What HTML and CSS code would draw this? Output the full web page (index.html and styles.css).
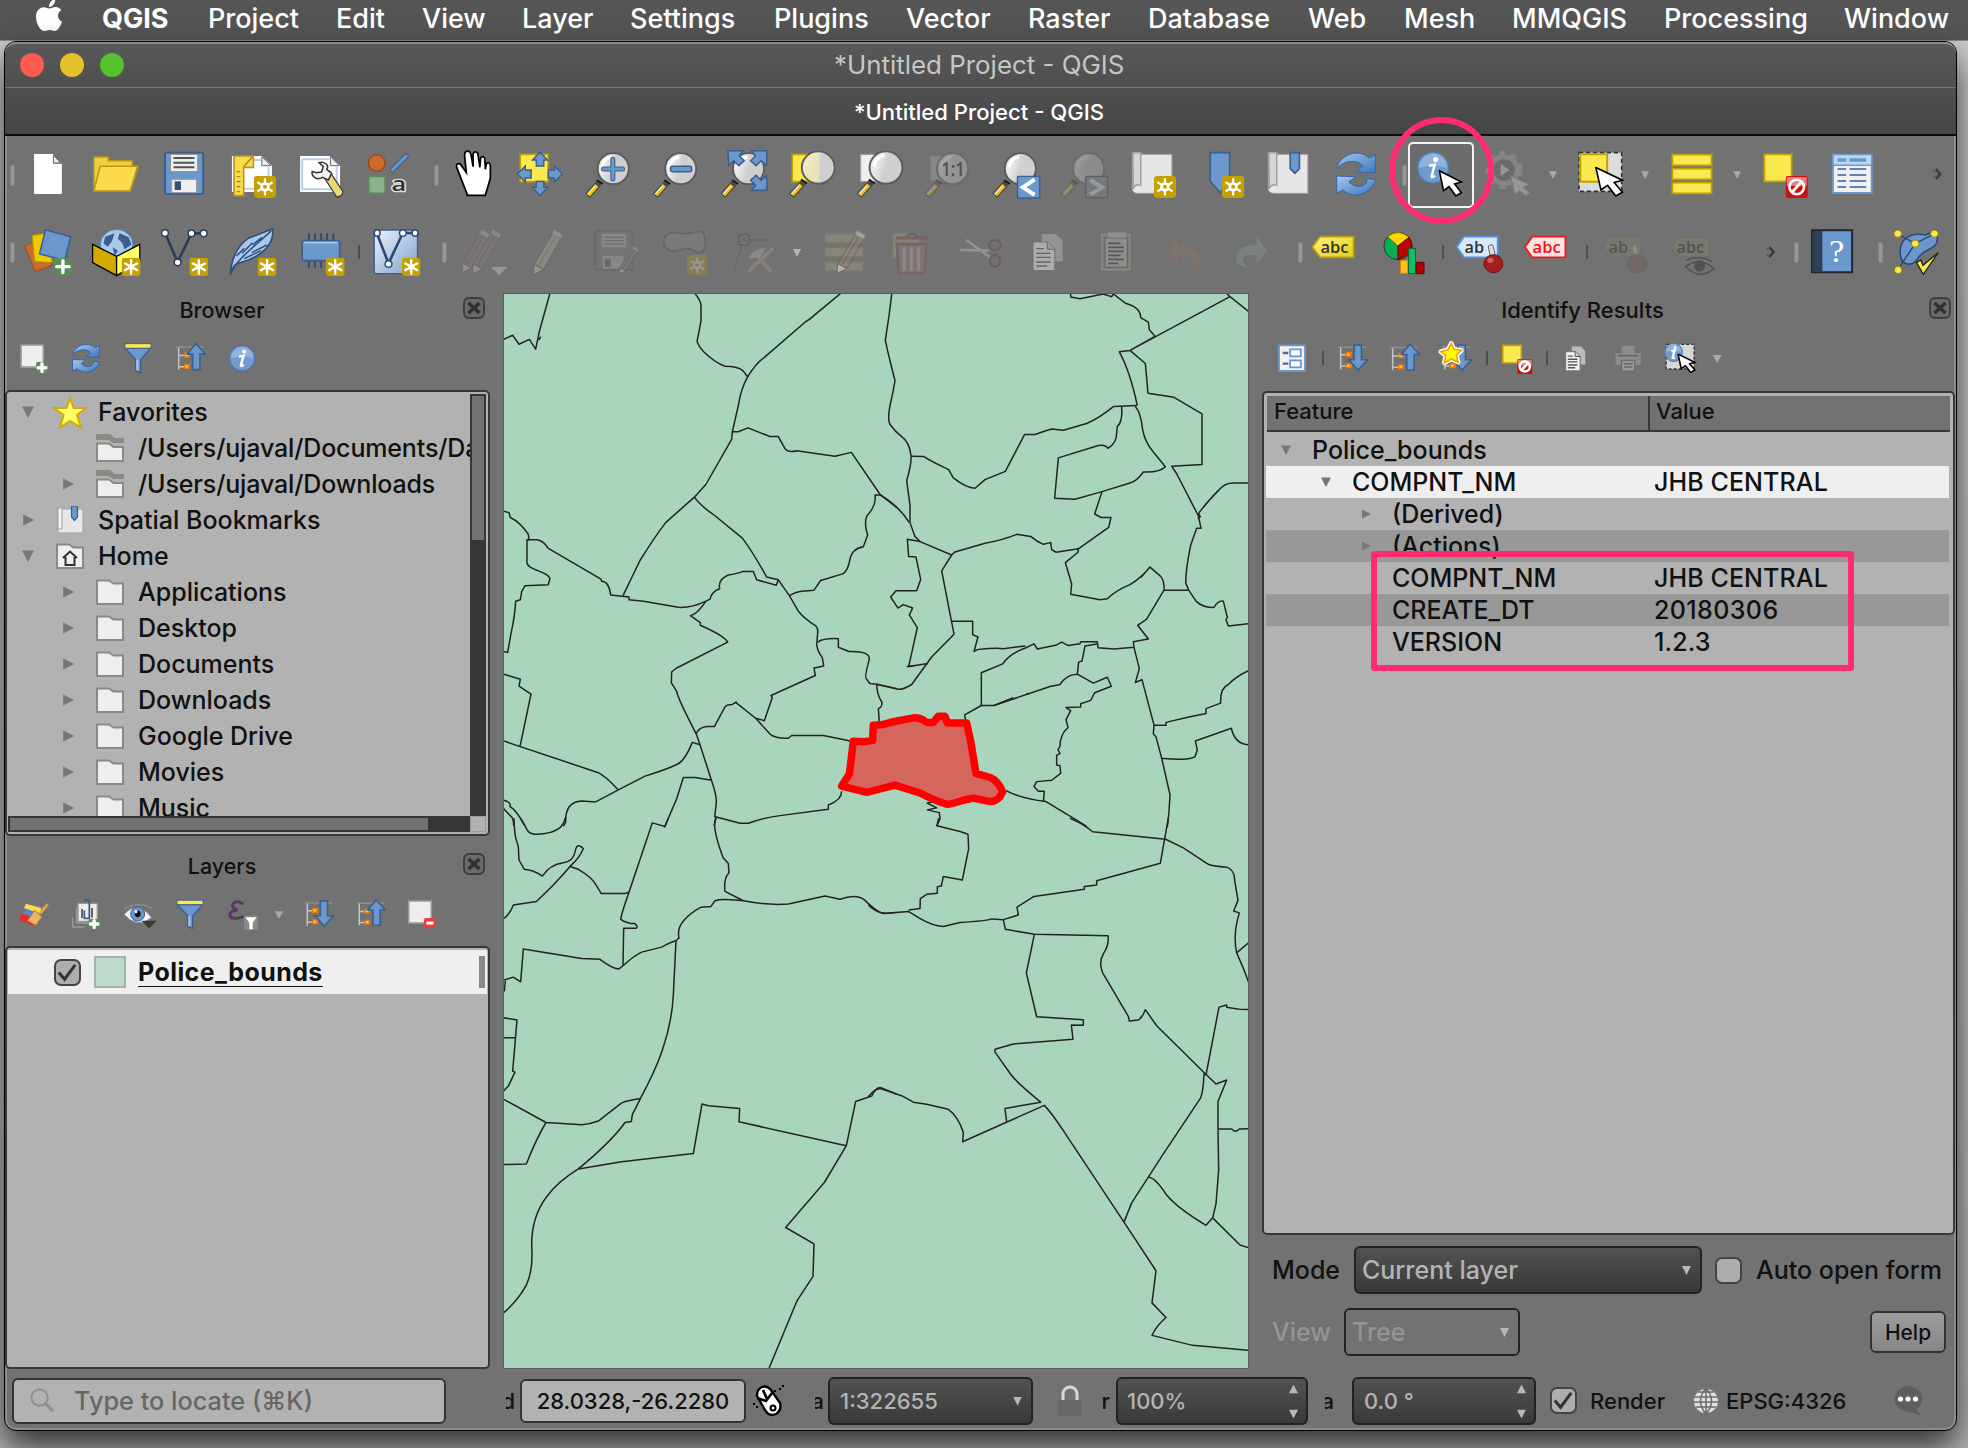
FILE: index.html
```html
<!DOCTYPE html>
<html lang="en">
<head>
<meta charset="utf-8">
<title>*Untitled Project - QGIS</title>
<link rel="stylesheet" href="styles.css">
</head>
<body>
<svg class="defs" width="0" height="0" aria-hidden="true">
  <defs>
    <linearGradient id="gLens" x1="0" y1="0" x2="1" y2="0.3"><stop offset="0.3" stop-color="#e9e9e9"/><stop offset="0.6" stop-color="#cfcfcf"/></linearGradient>
    <linearGradient id="gBlue" x1="0" y1="0" x2="1" y2="1"><stop offset="0" stop-color="#eef3fa"/><stop offset="1" stop-color="#7d9fcd"/></linearGradient>
    <linearGradient id="gArc" x1="0" y1="0" x2="1" y2="1"><stop offset="0" stop-color="#a9c8ea"/><stop offset="1" stop-color="#3a77bf"/></linearGradient>
    <linearGradient id="gTag" x1="0" y1="0" x2="1" y2="1"><stop offset="0" stop-color="#fff27a"/><stop offset="1" stop-color="#e5cf10"/></linearGradient>
    <symbol id="new" viewBox="0 0 22 22" preserveAspectRatio="none"><rect width="22" height="22" rx="4" fill="#c4a000"/><path d="M11 3v16M4 7l14 8M4 15l14-8" stroke="#fff" stroke-width="2.4" stroke-linecap="round"/></symbol>
    <symbol id="newsun" viewBox="0 0 22 22" preserveAspectRatio="none"><rect width="22" height="22" rx="4" fill="#c4a000"/><path d="M11 2.5v17M3.5 6.5l15 9M3.5 15.5l15-9" stroke="#fff" stroke-width="2.2"/><circle cx="11" cy="11" r="4.6" fill="#fff"/><circle cx="11" cy="11" r="2" fill="#c4a000"/></symbol>
    <symbol id="plus" viewBox="0 0 20 20" preserveAspectRatio="none"><rect width="20" height="20" rx="4" fill="#5a8c5a"/><path d="M10 3.5v13M3.5 10h13" stroke="#fff" stroke-width="3.4" stroke-linecap="round"/></symbol>
    <symbol id="ban" viewBox="0 0 20 20" preserveAspectRatio="none"><rect width="20" height="20" rx="2" fill="#cc1010"/><rect x="1" y="1" width="18" height="8" fill="#e58080"/><circle cx="10" cy="10" r="6.6" fill="none" stroke="#fff" stroke-width="2.6"/><path d="M14 5.5L6 14.500" stroke="#fff" stroke-width="2.8"/></symbol>
    <symbol id="mag" viewBox="0 0 106 136" preserveAspectRatio="none"><path d="M36 88L6 131" stroke="#4a4a4a" stroke-width="6.500"/><path d="M28 99L8 128" stroke="#f5c211" stroke-width="4"/><path d="M24 101L6 126" stroke="#fff" stroke-width="1"/><path d="M34 91l2-4" stroke="#111" stroke-width="7"/><ellipse cx="67" cy="49" rx="37" ry="47" fill="url(#gLens)" stroke="#5c5c5c" stroke-width="2"/><path d="M40 45c2-18 10-28 24-32" fill="none" stroke="#fff" stroke-width="3"/></symbol>
    <symbol id="cursor" viewBox="0 0 60 80" preserveAspectRatio="none"><path d="M2 2L12 62L25 50L41 78L54 68L38 42L54 36Z" fill="#fff" stroke="#000" stroke-width="1.600"/></symbol>
    <symbol id="refresh" viewBox="0 0 95 132" preserveAspectRatio="none"><path d="M2 50C8 10 52-14 78 18L93 8V62L48 60L64 42C48 20 18 26 2 50Z" fill="url(#gArc)" stroke="#2f66a8" stroke-width="1"/><path d="M93 82C87 122 43 146 17 114L2 124V72L47 74L31 90C47 112 77 104 72 80Z" fill="url(#gArc)" stroke="#2f66a8" stroke-width="1"/></symbol>
    <symbol id="info" viewBox="0 0 20 20" preserveAspectRatio="none"><circle cx="10" cy="10" r="9.500" fill="#6f9bcf" stroke="#4a78b0" stroke-width="1"/><path d="M1.500 10A8.500 8.500 0 0 1 18.500 10A22 16 0 0 0 1.500 10" fill="#8fb3dc"/><circle cx="11.500" cy="5" r="1.600" fill="#fff"/><path d="M7.500 8.800l3.500-.6-2 7.200c0 .8 1.200.4 2.200-.5" fill="none" stroke="#fff" stroke-width="2.500"/></symbol>
    <symbol id="tree-up" viewBox="0 0 90 80" preserveAspectRatio="none"><path d="M0 12H84" stroke="#8f8f8f" stroke-width="1.500"/><path d="M8 14V76M8 36H24M8 68H24" stroke="#c4c4c4" stroke-width="1.500" fill="none"/><path d="M24 28h18v14H24zM24 60h18v14H24z" fill="#f57900"/><path d="M28 32h8v6h-8zM28 64h8v6h-8z" fill="#fcd060"/><path d="M60 2L88 32H72V76H50V32H34Z" fill="#6b98cc" stroke="#3b5f8c" stroke-width="1.600"/></symbol>
    <symbol id="tree-down" viewBox="0 0 90 80" preserveAspectRatio="none"><path d="M0 10H84" stroke="#8f8f8f" stroke-width="1.500"/><path d="M8 12V74M8 32H24M8 64H24" stroke="#c4c4c4" stroke-width="1.500" fill="none"/><path d="M22 24h20v14H22zM22 56h20v14H22z" fill="#f57900"/><path d="M27 28h8v6h-8zM27 60h8v6h-8z" fill="#fcd060"/><path d="M48 4H70V46H88L60 76L32 46H48Z" fill="#6b98cc" stroke="#3b5f8c" stroke-width="1.600"/></symbol>
    <symbol id="funnel" viewBox="0 0 80 80" preserveAspectRatio="none"><path d="M2 14H78L48 44V78L33 72V44Z" fill="#6b98cc" stroke="#3b5f8c" stroke-width="1.400"/><path d="M38 44V72" stroke="#a9c8ea" stroke-width="2"/><rect x="1" y="2" width="78" height="12" fill="#fce94f" stroke="#3b5f8c" stroke-width="1"/></symbol>
    <symbol id="folder" viewBox="0 0 28 26" preserveAspectRatio="none"><path d="M1 25V1.500H13L17.500 4.500H27V25Z" fill="#eee" stroke="#8a8a84" stroke-width="2"/></symbol>
    <symbol id="folder-link" viewBox="0 0 28 28" preserveAspectRatio="none"><path d="M0 0H14L19 4H28V9H17L13 6H0Z" fill="#8a8a84"/><path d="M1 27V9.500H13L17.500 13H27V27Z" fill="#eee" stroke="#8a8a84" stroke-width="2"/></symbol>
    <symbol id="home" viewBox="0 0 28 26" preserveAspectRatio="none"><path d="M1 25V1.500H13L17.500 4.500H27V25Z" fill="#eee" stroke="#8a8a84" stroke-width="2"/><path d="M7 15L14 8.500L21 15M9.500 14V22H18.500V14" fill="none" stroke="#2e2e2e" stroke-width="2"/></symbol>
    <symbol id="book" viewBox="0 0 28 28" preserveAspectRatio="none"><path d="M2 1h5v2h20v24H4q-2.500 0-2.500-3z" fill="#e6e6e6" stroke="#a0a0a0" stroke-width="1"/><path d="M2 2h4v21H2z" fill="#f4f4f4" stroke="#a0a0a0"/><path d="M15.500 0h6v11l-3 3.500-3-3.500z" fill="#6b98cc" stroke="#3b5f8c" stroke-width="1.200"/></symbol>
    <symbol id="close" viewBox="0 0 22 22"><rect x="1" y="1" width="20" height="20" rx="5" fill="#696969" stroke="#3c3c3c" stroke-width="1.800"/><path d="M5.500 6L16.500 16M16.500 6L5.500 16" stroke="#303030" stroke-width="3.600"/></symbol>
    <symbol id="copy" viewBox="0 0 76 116" preserveAspectRatio="none"><path d="M22 2H56L74 24V88H22Z" fill="#bbb" stroke="#777" stroke-width="1.200"/><path d="M2 28H36L54 50V114H2Z" fill="#f2f2f2" stroke="#777" stroke-width="1.200"/><path d="M36 28V50H54" fill="#ccc" stroke="#555"/><path d="M10 48H28M10 62H44M10 74H44M10 88H44M10 100H36" stroke="#555" stroke-width="1.400"/></symbol>
    <symbol id="pencil" viewBox="0 0 72 136" preserveAspectRatio="none"><path d="M4 104L46 16L66 30L26 118Z" fill="#b6b69a" stroke="#555" stroke-width="1"/><path d="M14 108L54 24" stroke="#777" stroke-width="1"/><path d="M4 104L26 118L2 134Z" fill="#ddd" stroke="#555"/><path d="M46 16L50 2L72 18L66 30Z" fill="#ccc" stroke="#888"/></symbol>
    <symbol id="pencil-b" viewBox="0 0 72 136" preserveAspectRatio="none"><path d="M4 104L46 16L66 30L26 118Z" fill="#94807c" stroke="#555" stroke-width="1"/><path d="M14 108L54 24" stroke="#6a5450" stroke-width="1"/><path d="M4 104L26 118L2 134Z" fill="#ddd" stroke="#555"/><path d="M46 16L50 2L72 18L66 30Z" fill="#ccc" stroke="#888"/></symbol>
  </defs>
</svg>

<nav class="menubar">
  <svg class="apple" viewBox="0 0 26 34"><path d="M13.500 9.500C15 9.500 17 8 19.500 8C22 8 24.300 9.400 25.300 11.200C20.500 14 21.200 20.500 26 22.500C25 26 22 32 18.800 32C17 32 16 31 13.700 31C11.300 31 10.300 32 8.500 32C4 32 0 24 0 18C0 12 3.700 8.200 7.500 8.200C10 8.200 12 9.500 13.500 9.500ZM13 8C12.800 4 16 .5 19.200 0C19.700 4 16.500 8 13 8Z" fill="#fff"/></svg>
  <span class="app">QGIS</span><span>Project</span><span>Edit</span><span>View</span><span>Layer</span><span>Settings</span><span>Plugins</span><span>Vector</span><span>Raster</span><span>Database</span><span>Web</span><span>Mesh</span><span>MMQGIS</span><span>Processing</span><span>Window</span>
</nav>

<main class="window">
  <header class="titlebar"><i class="light red"></i><i class="light amber"></i><i class="light green"></i><h1>*Untitled Project - QGIS</h1></header>
  <div class="tabbar">*Untitled Project - QGIS</div>

  <div class="toolbar">
    <i class="handle w8"></i>
    <svg viewBox="33.3 426 161.600 198" preserveAspectRatio="none"><path d="M81 462H127V491H147V582H81Z" fill="#fff"/><path d="M127 465L144 489H127Z" fill="#eee" stroke="#666"/></svg>
    <svg viewBox="194.800 426 161.600 198" preserveAspectRatio="none"><path d="M223 573V471H257V482H314V500H328L310 573Z" fill="#f0cf3a" stroke="#b8961c" stroke-width="1.500"/><path d="M223 573L238 499H327L309 573Z" fill="#fcdb4a" stroke="#b8961c" stroke-width="1.500"/></svg>
    <svg viewBox="356.400 426 161.600 198" preserveAspectRatio="none"><rect x="392" y="458" width="91" height="124" rx="6" fill="#6b98cc" stroke="#3b5f8c" stroke-width="2"/><rect x="405" y="463" width="65" height="52" fill="#eee" stroke="#888"/><path d="M412 474H462M412 488H462M412 502H462" stroke="#555" stroke-width="2"/><rect x="408" y="538" width="59" height="40" fill="#eee" stroke="#999"/><rect x="415" y="544" width="15" height="26" fill="#35506f"/></svg>
    <svg viewBox="517.900 426 161.600 198" preserveAspectRatio="none"><path d="M551 468H622L646 497V576H551Z" fill="#fff"/><path d="M560 480H620M638 500V566H575" stroke="#b9cdf0" stroke-width="2" fill="none"/><path d="M622 470V497H644Z" fill="#eee" stroke="#666"/><path d="M556 468H602V502H579V587H556Z" fill="#fcdb4a" stroke="#b8961c" stroke-width="1.600"/><path d="M579 500L600 470M562 515H571M562 530H571M562 545H571M562 560H571M562 575H571" stroke="#a8861c" stroke-width="1.400"/><use href="#newsun" x="603" y="527" width="53" height="67"/></svg>
    <svg viewBox="679.500 426 161.600 198" preserveAspectRatio="none"><path d="M713 468H784L808 497V576H713Z" fill="#fff"/><path d="M718 478H782M800 500V568H718V478" stroke="#b9cdf0" stroke-width="2" fill="none"/><path d="M785 470V497H806Z" fill="#eee" stroke="#666"/><path d="M764 520L783 514L815 575Q814 590 800 591Z" fill="#ecd873" stroke="#444" stroke-width="1.300"/><path d="M742 514C738 530 754 542 766 532L780 540L788 520L776 508C784 494 770 484 758 488L768 500L764 516L752 518Z" fill="#f2f2f2" stroke="#333" stroke-width="1.500"/></svg>
    <svg viewBox="841 426 161.600 198" preserveAspectRatio="none"><ellipse cx="895" cy="489" rx="20" ry="25" fill="#cd6a30" stroke="#9c4a1a" stroke-width="1.500"/><path d="M932 510L965 468" stroke="#3b5f8c" stroke-width="5" stroke-linecap="round"/><path d="M932 510L965 468" stroke="#6b98cc" stroke-width="3" stroke-linecap="round"/><rect x="876" y="529" width="39" height="51" fill="#8fb08f" stroke="#5a8c5a" stroke-width="1.800"/><text x="930" y="574" font-size="60" textLength="35" lengthAdjust="spacingAndGlyphs" class="lbl halo">a</text></svg>
    <i class="handle w16"></i>
    <svg viewBox="1040.600 426 161.600 198" preserveAspectRatio="none"><path d="M1110 583L1086 505C1080 488 1094 486 1098 500L1108 518L1104 470C1102 450 1116 448 1119 464L1124 500V462C1126 452 1136 455 1136 466L1140 502L1142 474C1146 466 1152 470 1152 480L1153 508L1156 490C1162 484 1166 492 1165 502V535L1153 586H1110Z" fill="#fff" stroke="#000" stroke-width="1.700"/></svg>
    <svg viewBox="1202.100 426 161.600 198" preserveAspectRatio="none"><rect x="1236" y="463" width="66" height="82" fill="#fce94f" stroke="#c4a000" stroke-width="1.600"/><path d="M1283 456L1301 480H1292V498H1274V480H1265ZM1283 587L1265 562H1274V544H1292V562H1301ZM1229 522L1248 498V510H1262V534H1248V546ZM1336 522L1317 498V510H1303V534H1317V546Z" fill="#6b98cc" stroke="#3b5f8c" stroke-width="1.400"/></svg>
    <svg viewBox="1363.700 426 161.600 198" preserveAspectRatio="none"><use href="#mag" x="1390" y="457" width="106" height="136"/><path d="M1456 478V537M1434 507H1479" stroke="#3b5f8c" stroke-width="5" stroke-linecap="round"/><path d="M1456 478V537M1434 507H1479" stroke="#6b98cc" stroke-width="3" stroke-linecap="round"/></svg>
    <svg viewBox="-19 426 161.600 198" preserveAspectRatio="none"><use href="#mag" x="6" y="457" width="106" height="136"/><rect x="49" y="499" width="50" height="16" rx="4" fill="#6b98cc" stroke="#3b5f8c" stroke-width="1.500"/></svg>
    <svg viewBox="142.500 426 161.600 198" preserveAspectRatio="none"><use href="#mag" x="167" y="457" width="106" height="136"/><path d="M185 452H222L212 467L224 482L211 497L199 482L187 496ZM278 452H241L251 467L239 482L252 497L264 482L277 496ZM278 571H241L251 556L239 541L252 526L264 541L277 527Z" fill="#6b98cc" stroke="#3b5f8c" stroke-width="1.500"/></svg>
    <svg viewBox="304.100 426 161.600 198" preserveAspectRatio="none"><rect x="338" y="463" width="66" height="82" fill="#fce94f" stroke="#c4a000" stroke-width="1.600"/><use href="#mag" x="329" y="452" width="112" height="141"/><path d="M366 503C366 470 382 458 403 458V545C380 548 366 530 366 503Z" fill="#ece6b0" opacity=".8"/></svg>
    <svg viewBox="465.700 426 161.600 198" preserveAspectRatio="none"><rect x="500" y="463" width="66" height="82" fill="#eee" stroke="#999" stroke-width="1.400"/><use href="#mag" x="490" y="452" width="112" height="141"/></svg>
    <svg viewBox="627.200 426 161.600 198" preserveAspectRatio="none"><g opacity=".36"><rect x="666" y="468" width="60" height="74" fill="#aaa"/><use href="#mag" x="652" y="457" width="106" height="136"/></g><text x="692" y="528" font-size="58" textLength="56" lengthAdjust="spacingAndGlyphs" class="lbl dim">1:1</text></svg>
    <svg viewBox="788.800 426 161.600 198" preserveAspectRatio="none"><use href="#mag" x="813" y="457" width="106" height="136"/><rect x="873" y="529" width="53" height="65" rx="3" fill="#6b98cc" stroke="#3b5f8c" stroke-width="1.400"/><path d="M914 538L886 562L914 585" fill="none" stroke="#fff" stroke-width="4"/></svg>
    <svg viewBox="950.300 426 161.600 198" preserveAspectRatio="none"><g opacity=".28"><use href="#mag" x="975" y="457" width="106" height="136"/></g><rect x="1035" y="529" width="52" height="64" rx="3" fill="#74797e" stroke="#5c6066" stroke-width="1.400"/><path d="M1046 540L1074 562L1046 584" fill="none" stroke="#999" stroke-width="4"/></svg>
    <svg viewBox="1111.900 426 161.600 198" preserveAspectRatio="none"><path d="M1146 457H1166V463H1240V580H1160Q1146 580 1146 566Z" fill="#e6e6e6" stroke="#a0a0a0"/><path d="M1147 458H1166V556Q1154 550 1148 566Z" fill="#d6d6d6" stroke="#a0a0a0" stroke-width="1.500"/><use href="#newsun" x="1197" y="527" width="53" height="67"/></svg>
    <svg viewBox="1273.400 426 161.600 198" preserveAspectRatio="none"><path d="M1331 458H1377V540L1355 578L1331 544Z" fill="#6b98cc" stroke="#3b5f8c" stroke-width="1.600"/><use href="#newsun" x="1359" y="527" width="53" height="67"/></svg>
    <svg viewBox="1435 426 161.600 198" preserveAspectRatio="none"><path d="M1469 457H1489V463H1563V580H1483Q1469 580 1469 566Z" fill="#e6e6e6" stroke="#a0a0a0"/><path d="M1470 458H1489V556Q1477 550 1471 566Z" fill="#d6d6d6" stroke="#a0a0a0" stroke-width="1.500"/><path d="M1521 458H1543V506L1532 520L1521 506Z" fill="#6b98cc" stroke="#3b5f8c" stroke-width="1.600"/></svg>
    <svg viewBox="51.600 426 159.600 198" preserveAspectRatio="none"><use href="#refresh" x="84" y="456" width="95" height="132"/></svg>
    <i class="handle w18"></i>
    <div class="tool-on"><svg viewBox="253.500 426 155 198" preserveAspectRatio="none"><use href="#info" x="274" y="454" width="77" height="98"/><use href="#cursor" x="325" y="510" width="60" height="80"/></svg></div>
    <svg viewBox="408.400 426 159.600 198" preserveAspectRatio="none"><g opacity=".5"><ellipse cx="479" cy="510" rx="31" ry="40" fill="#666" stroke="#999" stroke-width="5"/><ellipse cx="479" cy="510" rx="38" ry="50" fill="none" stroke="#999" stroke-width="5" stroke-dasharray="6 6"/><path d="M471 492V528L492 510Z" fill="#bbb"/><path d="M494 526L504 585L515 572L530 588L540 578L524 562L538 554Z" fill="#bbb" stroke="#777"/></g></svg>
    <svg class="w24" viewBox="568 426 56.300 198" preserveAspectRatio="none"><path d="M584 514H603L594 537Z" fill="#aaa"/></svg>
    <svg viewBox="624.400 426 159.600 198" preserveAspectRatio="none"><rect x="655" y="458" width="100" height="116" fill="#ddd" stroke="#333" stroke-width="1.600" stroke-dasharray="4 3"/><rect x="658" y="463" width="63" height="82" fill="#fce94f" stroke="#c4a000" stroke-width="2"/><use href="#cursor" x="692" y="500" width="72" height="90"/></svg>
    <svg class="w24" viewBox="784 426 56.300 198" preserveAspectRatio="none"><path d="M801 514H819L810 537Z" fill="#aaa"/></svg>
    <svg viewBox="840.300 426 159.600 198" preserveAspectRatio="none"><path d="M874 464H966V496H874ZM874 506H966V538H874ZM874 548H966V580H874Z" fill="#fce94f" stroke="#c4a000" stroke-width="1.800"/></svg>
    <svg class="w24" viewBox="1000 426 56.300 198" preserveAspectRatio="none"><path d="M1017 514H1035L1026 537Z" fill="#aaa"/></svg>
    <svg viewBox="1056.300 426 159.600 198" preserveAspectRatio="none"><rect x="1090" y="463" width="64" height="81" fill="#fce94f" stroke="#c4a000" stroke-width="1.800"/><use href="#ban" x="1140" y="528" width="52" height="66"/></svg>
    <svg viewBox="1215.900 426 159.600 198" preserveAspectRatio="none"><rect x="1251" y="464" width="91" height="115" fill="#f0f0f0" stroke="#6b98cc" stroke-width="2"/><rect x="1253" y="466" width="87" height="28" fill="#b9d6f2"/><path d="M1251 496H1342" stroke="#6b98cc" stroke-width="1.500"/><path d="M1262 480H1282M1290 480H1329" stroke="#6b98cc" stroke-width="3.400"/><path d="M1262 507H1282M1290 507H1329M1262 525H1282M1290 525H1329M1262 543H1282M1290 543H1329M1262 561H1282M1290 561H1329" stroke="#5c84b8" stroke-width="2"/></svg>
    <svg class="more" viewBox="0 0 12 16"><path d="M4 3l4 5-4 5" fill="none" stroke="#3c3c3c" stroke-width="2.600"/><path d="M1 4l2 2M1 12l2-2" stroke="#555" stroke-width="1.500"/></svg>
  </div>

  <div class="toolbar second">
    <i class="handle w8"></i>
    <svg viewBox="33.300 657 161.600 198" preserveAspectRatio="none"><path d="M59 738L90 720L124 795L84 815Z" fill="#cd6a30" stroke="#9c4a1a"/><path d="M76 706L118 698L124 788L82 785Z" fill="#edc900" stroke="#a88c00"/><path d="M108 689L168 710L154 781L94 762Z" fill="#6b98cc" stroke="#3b5f8c" stroke-width="1.500"/><use href="#plus" x="127" y="773" width="45" height="54"/></svg>
    <svg viewBox="194.800 657 161.600 198" preserveAspectRatio="none"><ellipse cx="277" cy="734" rx="39" ry="46" fill="#a9c8ea" stroke="#4a78b0"/><path d="M250 710L272 700L266 724L256 740L246 730ZM284 700L306 712L312 734L296 748L290 728L280 716ZM268 742L280 752L272 768Z" fill="#3b5f8c"/><path d="M220 733L277 769V827L220 788Z" fill="#d4aa00" stroke="#000" stroke-width="1.300"/><path d="M332 733L277 769V827L332 788Z" fill="#ffff66" stroke="#000" stroke-width="1.300"/><use href="#new" x="289" y="773" width="45" height="55"/></svg>
    <svg viewBox="356.400 657 161.600 198" preserveAspectRatio="none"><path d="M392 699L422 786L455 700H484" fill="none" stroke="#2b3e55" stroke-width="2.600"/><g fill="#fff" stroke="#2b3e55" stroke-width="1.500"><ellipse cx="392" cy="699" rx="8" ry="10"/><ellipse cx="422" cy="787" rx="8" ry="10"/><ellipse cx="455" cy="700" rx="8" ry="10"/><ellipse cx="484" cy="700" rx="8" ry="10"/></g><use href="#new" x="450" y="773" width="45" height="55"/></svg>
    <svg viewBox="517.900 657 161.600 198" preserveAspectRatio="none"><path d="M547 824C550 780 560 740 590 715Q620 700 648 686C652 730 625 770 570 788Q554 790 547 824Z" fill="#a9c8ea" stroke="#2f4f7c" stroke-width="1.600"/><path d="M548 822C560 780 600 745 645 692M562 768L580 745M580 776L620 752M600 735L622 712M598 758L634 735M575 760L600 728" fill="none" stroke="#2f4f7c" stroke-width="1.500"/><use href="#new" x="612" y="773" width="45" height="55"/></svg>
    <svg viewBox="679.500 657 161.600 198" preserveAspectRatio="none"><path d="M734 700V804M748 700V804M763 700V804M777 700V804M792 700V804" stroke="#2b4a78" stroke-width="1.800"/><rect x="718" y="722" width="89" height="60" rx="5" fill="#6b98cc" stroke="#3b5f8c" stroke-width="1.600"/><path d="M723 728H802" stroke="#a9c8ea" stroke-width="1.600"/><use href="#new" x="774" y="773" width="45" height="55"/></svg>
    <i class="sep s8"></i>
    <svg viewBox="860 657 161.600 198" preserveAspectRatio="none"><rect x="889" y="690" width="103" height="131" rx="5" fill="url(#gBlue)" stroke="#3b5f8c" stroke-width="1.400"/><path d="M895 699L923 790L957 699H988" fill="none" stroke="#2b4a78" stroke-width="2.600"/><g fill="#fff" stroke="#2b4a78" stroke-width="1.500"><ellipse cx="896" cy="699" rx="7" ry="10"/><ellipse cx="923" cy="792" rx="8" ry="10"/><ellipse cx="957" cy="699" rx="8" ry="10"/><ellipse cx="986" cy="699" rx="7" ry="10"/></g><use href="#new" x="955" y="773" width="44" height="55"/></svg>
    <i class="handle w16"></i>
    <svg viewBox="1059.600 657 161.600 198" preserveAspectRatio="none"><g opacity=".26"><use href="#pencil-b" x="1095" y="685" width="70" height="136"/><use href="#pencil-b" x="1120" y="685" width="72" height="140"/></g><path d="M1166 801H1206L1186 826Z" fill="#979797"/></svg>
    <svg viewBox="1221.200 657 161.600 198" preserveAspectRatio="none"><g opacity=".34"><use href="#pencil" x="1265" y="686" width="73" height="140"/></g></svg>
    <svg viewBox="1382.700 657 161.600 198" preserveAspectRatio="none"><g opacity=".3"><rect x="1415" y="693" width="88" height="117" rx="5" fill="#767a80" stroke="#585858" stroke-width="2"/><rect x="1430" y="702" width="58" height="40" fill="#bbb"/><path d="M1436 712H1482M1436 722H1482M1436 732H1482" stroke="#555"/><rect x="1432" y="768" width="50" height="38" fill="#bbb"/><rect x="1437" y="776" width="14" height="24" fill="#555"/><use href="#pencil-b" x="1470" y="736" width="48" height="88"/></g></svg>
    <svg viewBox="0 657 161.600 198" preserveAspectRatio="none"><g opacity=".26"><path d="M34 740C28 700 50 690 78 702C110 700 128 680 130 715C136 760 120 765 98 748C70 738 60 770 34 740Z" fill="#8c968c" stroke="#444" stroke-width="1.700"/><use href="#newsun" x="88" y="765" width="48" height="60"/></g></svg>
    <svg viewBox="161.600 657 161.600 198" preserveAspectRatio="none"><g opacity=".32"><path d="M199 812L218 735M234 720H284" stroke="#555" stroke-width="1.500"/><rect x="212" y="704" width="22" height="30" fill="#888" stroke="#444" stroke-width="1.500"/><path d="M216 710L230 728M230 710L216 728" stroke="#333"/><path d="M234 815L292 745M256 768L288 815" stroke="#b0a488" stroke-width="4"/><path d="M234 778C240 755 255 745 274 745L264 770Z" fill="#bbb"/></g></svg>
    <svg class="w26" viewBox="323.100 657 61.800 198" preserveAspectRatio="none"><path d="M340 747H359L349 771Z" fill="#b4b4b4"/></svg>
    <svg viewBox="384.900 657 161.600 198" preserveAspectRatio="none"><g opacity=".38"><path d="M416 702H506V728H416ZM416 743H506V770H416ZM416 786H506V812H416Z" fill="#a8a48a" stroke="#8f8a60" stroke-width="1.500"/></g><g opacity=".5"><use href="#pencil-b" x="442" y="688" width="71" height="135"/></g></svg>
    <svg viewBox="546.400 657 161.600 198" preserveAspectRatio="none"><g opacity=".36"><path d="M577 700H640V775H577Z" fill="#a8a48a" stroke="#8f8a60"/><path d="M584 714H659M608 712Q622 690 638 712" stroke="#84484c" stroke-width="3" fill="none"/><path d="M586 732H657L652 820H592Z" fill="#957a7c" stroke="#84484c" stroke-width="2.400"/><path d="M604 742V812M621 742V812M638 742V812" stroke="#c0b0b0" stroke-width="3"/></g></svg>
    <svg viewBox="708 657 161.600 198" preserveAspectRatio="none"><g opacity=".45"><path d="M737 750L805 752M751 720L812 775" stroke="#bbb" stroke-width="2.600"/><ellipse cx="820" cy="735" rx="14" ry="15" fill="none" stroke="#6c4444" stroke-width="2.200"/><ellipse cx="820" cy="782" rx="12" ry="17" fill="none" stroke="#6c4444" stroke-width="2.200"/></g></svg>
    <svg viewBox="869.600 657 161.600 198" preserveAspectRatio="none"><g opacity=".45"><use href="#copy" x="908" y="698" width="76" height="116"/></g></svg>
    <svg viewBox="1031.100 657 161.600 198" preserveAspectRatio="none"><g opacity=".55"><path d="M1074 703H1140V809H1074Z" fill="#8a8478" stroke="#a39a88" stroke-width="1.500"/><path d="M1081 714H1134V802H1081Z" fill="#a4a4a4" stroke="#555"/><rect x="1088" y="697" width="42" height="16" fill="#aaa"/><path d="M1088 730H1118M1088 742H1126M1088 754H1126M1088 766H1118M1088 778H1126M1088 790H1112" stroke="#444" stroke-width="1.600"/></g></svg>
    <svg viewBox="1192.700 657 161.600 198" preserveAspectRatio="none"><path d="M1228 752L1256 705V735C1296 730 1316 765 1308 790Q1300 806 1272 804C1300 785 1290 760 1256 768V795Z" fill="#7e726c" stroke="#7a6c64"/></svg>
    <svg viewBox="1354.200 657 161.600 198" preserveAspectRatio="none"><path d="M1467 752L1440 705V735C1400 730 1384 765 1394 790Q1404 806 1426 804C1400 785 1405 760 1440 768V795Z" fill="#7a827d" stroke="#6c756f"/></svg>
    <i class="handle w14"></i>
    <svg class="w66" viewBox="4.700 657 155 198" preserveAspectRatio="none"><path d="M29 741L47 710H126V772H47Z" fill="url(#gTag)" stroke="#b89c10" stroke-width="1.800"/><text x="48" y="758" font-size="50" textLength="66" lengthAdjust="spacingAndGlyphs" class="lbl">abc</text></svg>
    <svg viewBox="159.600 657 159.600 198" preserveAspectRatio="none"><ellipse cx="230" cy="738" rx="33" ry="41" fill="#00b050" stroke="#333"/><path d="M230 738L206 710Q230 684 256 712Z" fill="#ffd400" stroke="#a07000"/><path d="M230 738L256 712Q272 750 250 766L230 779Z" fill="#c00000" stroke="#600"/><path d="M236 781H253V820H236Z" fill="#ffc020" stroke="#e08000"/><path d="M255 745H271V821H255Z" fill="#10c060" stroke="#064"/><path d="M273 787H291V821H273Z" fill="#b00000" stroke="#600"/></svg>
    <i class="sep s10"></i>
    <svg viewBox="342.700 657 159.600 198" preserveAspectRatio="none"><path d="M368 741L385 710H464V772H385Z" fill="#d7e8fb" stroke="#4f94ea" stroke-width="1.800"/><text x="386" y="758" font-size="50" textLength="46" lengthAdjust="spacingAndGlyphs" class="lbl">ab</text><path d="M448 742L454 774" stroke="#666" stroke-width="6" stroke-linecap="round"/><path d="M448 742L454 774" stroke="#ddd" stroke-width="4" stroke-linecap="round"/><ellipse cx="454" cy="791" rx="22" ry="27" fill="#a41e1e" stroke="#6c1010"/><ellipse cx="447" cy="781" rx="7" ry="8" fill="#d06060"/></svg>
    <svg viewBox="502.300 657 159.600 198" preserveAspectRatio="none"><path d="M528 741L545 710H623V772H545Z" fill="#ffe3e3" stroke="#f01818" stroke-width="1.800"/><text x="546" y="758" font-size="50" textLength="66" lengthAdjust="spacingAndGlyphs" class="lbl redt">abc</text></svg>
    <i class="sep s8"></i>
    <svg viewBox="680.700 657 159.600 198" preserveAspectRatio="none"><g opacity=".45"><path d="M710 741L727 710H801V772H727Z" fill="#807e6a" stroke="#6b6858"/><text x="724" y="758" font-size="50" textLength="46" lengthAdjust="spacingAndGlyphs" class="lbl">ab</text><path d="M785 742L791 774" stroke="#aaa" stroke-width="4" stroke-linecap="round"/><ellipse cx="792" cy="791" rx="22" ry="27" fill="#7a5a5a" stroke="#555"/></g></svg>
    <svg viewBox="840.300 657 159.600 198" preserveAspectRatio="none"><g opacity=".5"><path d="M870 741L887 711H960V770H887Z" fill="#807e6a" stroke="#6b6858"/><text x="884" y="758" font-size="50" textLength="64" lengthAdjust="spacingAndGlyphs" class="lbl">abc</text><path d="M905 800Q938 768 972 806Q938 842 905 800ZM906 780Q938 764 968 784" fill="none" stroke="#333" stroke-width="1.500"/><ellipse cx="938" cy="798" rx="13" ry="17" fill="#333"/></g></svg>
    <svg class="w64" viewBox="0 0 64 66"><path d="M43.500 28l4 5-4 5" fill="none" stroke="#3c3c3c" stroke-width="2.600"/><path d="M40.500 29l2 2M40.500 37l2-2" stroke="#555" stroke-width="1.500"/></svg>
    <i class="handle w8"></i>
    <svg viewBox="1169 657 159.600 198" preserveAspectRatio="none"><rect x="1202" y="691" width="94" height="126" fill="#6b98cc" stroke="#1d2733" stroke-width="2"/><rect x="1203" y="693" width="23" height="122" fill="#2f4054"/><text x="1242" y="786" font-size="92" textLength="36" lengthAdjust="spacingAndGlyphs" class="qm">?</text></svg>
    <i class="handle w16"></i>
    <svg viewBox="1366 657 159.600 198" preserveAspectRatio="none"><path d="M1410 770C1402 720 1430 695 1468 705C1490 690 1500 700 1494 730C1484 752 1466 745 1450 775C1440 798 1414 800 1410 770Z" fill="#6b98cc" stroke="#2b4a78" stroke-width="1.600"/><path d="M1402 701L1444 731L1489 701M1444 731L1403 809" fill="none" stroke="#2b4a78" stroke-width="1.500"/><g fill="#fce94f" stroke="#8f7a10"><ellipse cx="1403" cy="701" rx="9" ry="11"/><ellipse cx="1489" cy="701" rx="9" ry="11"/><ellipse cx="1444" cy="731" rx="9" ry="11"/><ellipse cx="1404" cy="810" rx="9" ry="11"/></g><path d="M1447 788L1457 780L1462 796L1498 758L1463 823Z" fill="#fce94f" stroke="#222" stroke-width="1.300"/></svg>
  </div>

  <div class="body">
    <section class="left">
      <div class="dock-title">Browser<svg class="x"><use href="#close"/></svg></div>
      <div class="mini">
        <svg viewBox="24 131.600 156 145.600" preserveAspectRatio="none"><rect x="63" y="168" width="67" height="62" fill="#eee" stroke="#9a9a92" stroke-width="1.600"/><use href="#plus" x="108" y="215" width="36" height="33"/></svg>
        <svg viewBox="180 131.600 156 145.600" preserveAspectRatio="none"><use href="#refresh" x="216" y="164" width="84" height="82"/></svg>
        <svg viewBox="336 131.600 156 145.600" preserveAspectRatio="none"><use href="#funnel" x="374" y="162" width="80" height="86"/></svg>
        <svg viewBox="492 131.600 156 145.600" preserveAspectRatio="none"><use href="#tree-up" x="528" y="162" width="90" height="79"/></svg>
        <svg viewBox="648 131.600 156 145.600" preserveAspectRatio="none"><use href="#info" x="687" y="168" width="79" height="74"/></svg>
      </div>
      <div class="box browser">
        <div class="rows">
          <div class="row"><i class="tri down"></i><svg class="fi"><path d="M14 0l3.800 10H30l-9 7 4 12.500L14 23 4 29.500 7.500 17-2 10H10.500z" fill="#ffff66" stroke="#d4aa00" stroke-width="2"/></svg><span>Favorites</span></div>
          <div class="row l1 path"><i class="tri none"></i><svg class="fi"><use href="#folder-link"/></svg><span>/Users/ujaval/Documents/Data</span></div>
          <div class="row l1 path"><i class="tri"></i><svg class="fi"><use href="#folder-link"/></svg><span>/Users/ujaval/Downloads</span></div>
          <div class="row"><i class="tri"></i><svg class="fi"><use href="#book"/></svg><span>Spatial Bookmarks</span></div>
          <div class="row"><i class="tri down"></i><svg class="fi f"><use href="#home"/></svg><span>Home</span></div>
          <div class="row l1"><i class="tri"></i><svg class="fi f"><use href="#folder"/></svg><span>Applications</span></div>
          <div class="row l1"><i class="tri"></i><svg class="fi f"><use href="#folder"/></svg><span>Desktop</span></div>
          <div class="row l1"><i class="tri"></i><svg class="fi f"><use href="#folder"/></svg><span>Documents</span></div>
          <div class="row l1"><i class="tri"></i><svg class="fi f"><use href="#folder"/></svg><span>Downloads</span></div>
          <div class="row l1"><i class="tri"></i><svg class="fi f"><use href="#folder"/></svg><span>Google Drive</span></div>
          <div class="row l1"><i class="tri"></i><svg class="fi f"><use href="#folder"/></svg><span>Movies</span></div>
          <div class="row l1"><i class="tri"></i><svg class="fi f"><use href="#folder"/></svg><span>Music</span></div>
        </div>
        <div class="vbar"><i></i></div>
        <div class="hbar"><i></i></div>
        <div class="corner"></div>
      </div>
      <div class="dock-title layers-title">Layers<svg class="x"><use href="#close"/></svg></div>
      <div class="mini">
        <svg viewBox="24 147 156 132" preserveAspectRatio="none"><path d="M58 228L75 188L120 200L100 243Z" fill="#ef2929"/><path d="M66 212L76 188L126 202L112 226Z" fill="#5a86c0"/><path d="M72 198L78 187L124 198L120 212Z" fill="#fcdb4a"/><path d="M143 188L120 212" stroke="#e9a540" stroke-width="3"/><path d="M104 204L126 220L108 242L82 230Z" fill="#e8b36a" stroke="#a87838" stroke-width="1"/></svg>
        <svg viewBox="180 147 156 132" preserveAspectRatio="none"><path d="M218 222V246H254M230 196V236H270" fill="none" stroke="#999" stroke-width="1.500"/><rect x="234" y="186" width="58" height="46" fill="#eee" stroke="#999" stroke-width="1.400"/><path d="M253 204V224H268V182Q262 170 254 182" fill="none" stroke="#3b5f8c" stroke-width="1.800"/><path d="M246 200V224M276 198V222" stroke="#444" stroke-width="1.600"/><use href="#plus" x="265" y="225" width="35" height="27"/></svg>
        <svg viewBox="336 147 156 132" preserveAspectRatio="none"><path d="M372 214Q412 176 455 222Q412 252 372 214Z" fill="#f4f4f4" stroke="#888"/><path d="M372 200Q414 180 456 198" fill="none" stroke="#8c8c8c" stroke-width="1.500"/><ellipse cx="413" cy="213" rx="21" ry="18" fill="#6b98cc" stroke="#3b5f8c"/><ellipse cx="413" cy="213" rx="9" ry="8" fill="#111"/><circle cx="408" cy="207" r="4" fill="#fff"/><path d="M425 230H470L447 250Z" fill="#3a3a3a"/></svg>
        <svg viewBox="492 147 156 132" preserveAspectRatio="none"><use href="#funnel" x="530" y="176" width="80" height="76"/></svg>
        <svg viewBox="648 147 156 132" preserveAspectRatio="none"><path d="M730 188C704 170 682 196 712 202C676 206 684 236 732 219" fill="none" stroke="#5c3566" stroke-width="3"/><rect x="732" y="217" width="42" height="36" fill="#8a8a84"/><path d="M736 221H770L758 235V252H748V235Z" fill="#fff"/></svg>
        <svg class="w25" viewBox="804 147 75 132" preserveAspectRatio="none"><path d="M824 206H850L837 226Z" fill="#a8a8a8"/></svg>
        <svg viewBox="879 147 156 132" preserveAspectRatio="none"><use href="#tree-down" x="914" y="176" width="88" height="72"/></svg>
        <svg viewBox="1035 147 156 132" preserveAspectRatio="none"><use href="#tree-up" x="1070" y="175" width="88" height="70"/></svg>
        <svg viewBox="1191 147 156 132" preserveAspectRatio="none"><rect x="1226" y="180" width="68" height="56" fill="#eee" stroke="#9a9a92" stroke-width="1.600"/><rect x="1272" y="223" width="36" height="26" rx="5" fill="#ef3b3b"/><path d="M1279 236H1301" stroke="#fff" stroke-width="3"/></svg>
      </div>
      <div class="box layers">
        <div class="layer"><span class="check on"><svg viewBox="0 0 28 28"><path d="M5 14l6 7L22 6" fill="none" stroke="#333" stroke-width="3"/></svg></span><i class="swatch"></i><b>Police_bounds</b><i class="mark"></i></div>
      </div>
    </section>

    <section class="canvas">
      <svg viewBox="504 294 744 1074">
        <g transform="translate(495 285) scale(.333333 .3444)">
          <path d="M20 160L53 146L72 172L103 158L122 186L133 135L166 20M137 150L132 160"/>
          <path d="M596 20Q618 45 618 60V105L606 165Q612 180 626 194Q660 226 690 236Q730 236 745 250L758 267M758 267Q780 230 808 210L930 108Q945 100 960 86L1040 22"/>
          <path d="M758 267Q738 300 730 350L712 426L710 448L632 580L598 616L512 690Q480 730 435 800L384 902"/>
          <path d="M712 426H730L759 415L825 440H850L870 475Q880 488 905 481L1020 497L1069 486L1156 609L1205 646"/>
          <path d="M598 616Q615 640 660 670L742 735Q770 770 815 848L850 856L883 902L910 947Q930 970 960 988Q970 995 968 1010L965 1045Q968 1065 982 1082L986 1106L957 1112L961 1134L828 1192L832 1198L808 1265L782 1258"/>
          <path d="M850 856L844 872L785 856L775 832H742Q735 836 700 842Q668 855 674 882Q650 890 645 912L633 918Q590 938 550 936L445 918L402 914V906L347 900Q342 860 320 860L318 854L160 765Q145 742 125 740H98"/>
          <path d="M20 655L42 661L46 675Q75 688 100 724L102 740H96V808Q100 820 125 828Q170 845 164 855L160 870L90 873L80 890L76 914L62 918Q60 960 48 1012L38 1067L20 1062"/>
          <path d="M633 918Q608 955 586 960L616 980V988Q690 1020 698 1037L545 1112L530 1123L529 1155L545 1180Q548 1200 604 1304L615 1335L650 1440Q668 1490 663 1510L659 1545"/>
          <path d="M604 1304Q610 1285 635 1282H658L690 1225Q695 1218 712 1218L722 1212L782 1258L825 1304Q845 1318 880 1316L890 1308L985 1308L1070 1325M712 1218L725 1210"/>
          <path d="M20 1128L76 1145L72 1165L108 1188L75 1340M20 1322L310 1416Q330 1425 370 1466L450 1426Q520 1405 550 1390Q570 1380 592 1328L615 1335M370 1466L302 1501L260 1498Q210 1500 212 1560L205 1572"/>
          <path d="M650 1438L600 1430H565L545 1492L508 1575M664 1545L735 1563H760Q810 1545 860 1540L1000 1522V1510Q1040 1495 1040 1470M659 1545H664L657 1570"/>
          <path d="M883 902Q905 890 920 889L957 886L977 858L1045 838Q1060 825 1064 800Q1070 765 1105 760L1118 726Q1106 690 1116 670Q1145 640 1140 610H1156"/>
          <path d="M968 1037Q985 1025 1030 1027V1052L1062 1064Q1130 1062 1122 1090Q1108 1140 1114 1143L1124 1157L1145 1159L1205 1172M1145 1159Q1146 1190 1160 1210Q1164 1225 1150 1230L1153 1270"/>
          <path d="M20 1495Q50 1500 45 1515Q60 1520 90 1570M20 1515L50 1545Q56 1552 56 1570"/>
        </g>
        <g transform="translate(870 285) scale(.333333 .3444)">
          <path d="M66 20L57 90L46 160Q50 180 60 220L75 278Q70 310 60 350Q52 390 60 405Q75 425 95 440Q118 455 123 495Q125 520 110 568L120 640V690L135 730L150 745"/>
          <path d="M30 609Q90 645 118 690M123 497L162 498Q180 510 236 536L250 560Q290 590 315 590L345 565L406 541L464 434H495Q520 425 545 418L580 422L650 402Q690 385 730 353L800 350"/>
          <path d="M602 20V35L630 40L700 26L725 34L730 26L768 54Q812 65 812 95L835 108L838 130L855 149M780 190L1080 34L1066 20M1080 34L1140 80M855 149L780 190L748 194Q780 250 802 350"/>
          <path d="M780 190L826 228L834 314L912 326L996 374V521L905 526L920 548L985 670L988 660Q1020 620 1050 592Q1065 575 1090 575H1140"/>
          <path d="M796 353Q812 370 818 420Q824 455 850 485L886 528Q870 545 820 543Q800 570 780 575L696 600L615 622L554 619L565 502L685 466Q705 462 714 474Q740 460 740 430L742 410Q758 400 755 353"/>
          <path d="M696 600L674 665L694 675H723L716 704L625 766L558 776L545 768L542 748L520 753Q500 745 482 730L440 724Q400 740 345 750L255 775L245 784L150 745L112 738L116 788L138 790L152 855L140 888H78L62 906L84 938L100 928L128 938L118 958L142 995L116 1108L174 1099"/>
          <path d="M245 784L215 830L252 1014L185 1080L125 1160Q100 1175 85 1174L20 1159M244 976H308V1015L324 1022L312 1064L325 1058Q380 1052 400 1056L466 1048M110 1108L130 1107"/>
          <path d="M625 766L624 776L586 806L605 868L602 898L690 914L712 911Q740 885 780 870Q815 850 840 819L812 850M840 819L872 846Q884 860 882 886L830 970L803 988L835 1028L790 1036L792 1052L732 1057L684 1053L682 1036H632L630 1042L595 1047L575 1037L560 1045L502 1057L492 1042L466 1054Q420 1070 398 1100L334 1126V1221H372L540 1166L570 1160Q590 1130 622 1130L626 1095L636 1092L645 1048L684 1042"/>
          <path d="M882 886H956L947 865Q948 820 962 756L980 706H993L985 670M985 665l6 8-8 6M956 886L978 918Q1000 938 1032 936Q1045 915 1060 918L1072 965L1068 972L1075 990L1140 983"/>
          <path d="M792 1052L808 1114L796 1154L816 1146L852 1278H888V1270L950 1256L1008 1244V1230L1052 1214Q1050 1170 1075 1160Q1100 1135 1140 1118M852 1278L850 1304L858 1312L875 1374L900 1480Q898 1530 892 1575M875 1374Q950 1382 975 1370L982 1350L976 1324L1084 1287Q1095 1335 1140 1335"/>
          <path d="M622 1130L670 1156L712 1139L724 1165L674 1184L662 1206L632 1216V1225L588 1227L602 1236L588 1262L594 1285Q570 1305 570 1340L564 1350L570 1360L560 1366V1394L570 1396L572 1418L545 1438L500 1442L492 1456L505 1470H523L520 1500"/>
          <path d="M334 1221L284 1248L288 1272M408 1468Q450 1490 528 1500L605 1545L650 1572M190 1500L172 1504L200 1518L172 1524L208 1532L210 1550L200 1572M372 1221L420 1202L430 1198M470 1185L478 1188"/>
          <path class="hit" d="M10 1278L8 1322L-16 1326L-50 1325L-62 1420L-85 1455L-10 1473L75 1452L150 1475Q200 1500 232 1508Q250 1506 280 1496L310 1490L360 1500Q385 1500 398 1472Q385 1440 360 1430L318 1418L303 1330L290 1272H232L225 1252H205L190 1270H170Q150 1255 130 1257L70 1268L40 1276Z"/>
        </g>
        <g transform="translate(495 820) scale(.333333 .357143)">
          <path d="M57 -5Q58 30 62 50L70 75L72 112L88 138Q115 140 142 157Q165 125 205 120Q235 115 240 90Q245 60 265 80Q255 105 225 130Q180 180 124 228L55 238Q45 265 20 280"/>
          <path d="M76 -5L98 30Q110 45 150 38Q205 30 210 -5M225 130L250 138Q290 160 302 180L319 206H390L402 202M520 -5L510 18L472 8L402 202Q380 260 377 278Q395 290 420 290Q430 298 424 303H386L384 408"/>
          <path d="M662 -5Q650 20 684 105L700 122L702 148Q685 165 690 200L745 226Q820 240 880 235L990 213L1035 222Q1085 205 1110 225Q1150 262 1170 262L1200 259M760 228Q680 218 660 226L648 242L618 244Q540 285 552 330L543 338Q530 340 500 356L440 370Q420 378 384 408L372 417Q350 415 315 390L260 388L85 361L77 453L55 440L20 450M31 450L28 480"/>
          <path d="M543 338L535 490Q530 570 502 645Q480 705 436 780L412 825L409 844L390 847Q350 900 250 977Q185 1015 155 1055Q110 1110 110 1190Q115 1260 95 1300Q70 1345 20 1385"/>
          <path d="M436 780Q400 785 380 792L310 843Q285 852 260 853L153 847L20 779M153 847Q125 890 94 963L20 965M20 553L66 560L53 703L60 706L40 745L20 765M20 610H60M250 977L380 957L595 934L621 795L640 800L734 808L732 845L1054 912L1082 788L1130 773Q1145 745 1160 750L1205 768M1054 912L988 1015L872 1141L957 1187L954 1278L905 1348L820 1540"/>
        </g>
        <g transform="translate(870 820) scale(.333333 .357143)">
          <path d="M-5 238Q20 262 50 261L115 256L148 275Q190 298 220 298L270 287Q350 283 365 277L400 279L445 266L441 244L492 214L643 194V186L680 182V170L871 121L895 -5M206 -5L201 16L270 32L294 40L296 80L277 168L220 158L214 185L202 187V205L170 208L151 220L150 248L116 252"/>
          <path d="M600 -5Q640 10 668 33L887 54L940 78L1015 124Q1030 130 1070 132Q1095 140 1094 170L1104 225L1091 255L1108 260Q1088 320 1100 372L1120 415L1140 465M1100 372L1140 340M400 279L406 306L493 320L714 324Q718 350 700 375Q685 400 698 428L775 550L778 563L805 560Q820 550 826 531L860 576L1005 710L1038 739L1070 728L1044 788V865L1046 980L1038 1075L1028 1114L1008 1135Q920 1085 890 1050Q855 1000 836 1000"/>
          <path d="M493 320L469 428L500 551L640 559V575L604 574L609 614L430 627L375 642V650L422 712Q440 735 512 790L405 808L410 846M-5 775Q20 745 40 755L95 772L130 790L170 796L235 810Q265 830 280 875L278 901L523 799Q545 820 580 870L762 1126L858 1262L846 1352L888 1393Q860 1415 846 1443L968 1471L1140 1485"/>
          <path d="M1140 531L1108 530L1070 524V518L1047 524L1008 714L1002 710Q1000 760 992 778L880 935L785 1072L762 1126M1044 865H1085Q1095 878 1108 865L1140 864M1028 1114L1110 1190L1140 1199"/>
        </g>
      </svg>
    </section>

    <section class="right">
      <div class="dock-title">Identify Results<svg class="x"><use href="#close"/></svg></div>
      <div class="mini">
        <svg viewBox="56 141 112 156" preserveAspectRatio="none"><rect x="84" y="181" width="56" height="77" fill="#f2f2f2" stroke="#6b98cc" stroke-width="1.800"/><path d="M92 204H104M92 236H104" stroke="#4a6a94" stroke-width="2.400"/><rect x="108" y="193" width="23" height="21" fill="#fff" stroke="#6b98cc" stroke-width="1.800"/><rect x="108" y="226" width="23" height="21" fill="#fff" stroke="#6b98cc" stroke-width="1.800"/></svg>
        <i class="sep s8"></i>
        <svg viewBox="185.200 141 112 156" preserveAspectRatio="none"><use href="#tree-down" x="211" y="176" width="65" height="84"/></svg>
        <svg viewBox="297.200 141 112 156" preserveAspectRatio="none"><use href="#tree-up" x="323" y="175" width="65" height="84"/></svg>
        <svg viewBox="409.200 141 112 156" preserveAspectRatio="none"><use href="#tree-down" x="435" y="176" width="65" height="84"/><path d="M455 175L461 193L477 196L466 210L470 232L455 222L440 234L443 211L432 200L448 194Z" fill="#ff0" stroke="#fff" stroke-width="4.500" stroke-linejoin="round"/><path d="M455 175L461 193L477 196L466 210L470 232L455 222L440 234L443 211L432 200L448 194Z" fill="#ff0" stroke="#f5a000" stroke-width="1.600"/></svg>
        <i class="sep s8"></i>
        <svg viewBox="538.500 141 112 156" preserveAspectRatio="none"><rect x="566" y="181" width="40" height="53" fill="#fce94f" stroke="#c4a000" stroke-width="1.600"/><use href="#ban" x="597" y="222" width="33" height="45"/></svg>
        <i class="sep s8"></i>
        <svg viewBox="667.700 141 112 156" preserveAspectRatio="none"><use href="#copy" x="700" y="181" width="46" height="78"/></svg>
        <svg viewBox="779.700 141 112 156" preserveAspectRatio="none"><path d="M822 182H850V205H822ZM809 205H863V240H809Z" fill="#8c8c8c"/><path d="M814 212H858" stroke="#666" stroke-width="1.500"/><path d="M822 226H850V258H822Z" fill="#999" stroke="#666"/><path d="M827 236H845M827 246H845" stroke="#666" stroke-width="1.500"/></svg>
        <svg viewBox="891.700 141 112 156" preserveAspectRatio="none"><rect x="918" y="178" width="60" height="74" fill="#d8d8d8" stroke="#333" stroke-width="1.300" stroke-dasharray="3 2"/><use href="#info" x="914" y="173" width="40" height="58"/><use href="#cursor" x="942" y="206" width="42" height="58"/></svg>
        <svg class="w24" viewBox="1003.700 141 51.700 156" preserveAspectRatio="none"><path d="M1018 210H1037L1028 235Z" fill="#aaa"/></svg>
      </div>
      <div class="box results">
        <div class="head"><span>Feature</span><span>Value</span></div>
        <div class="r"><i class="tri down"></i><span>Police_bounds</span></div>
        <div class="r sel d1"><i class="tri down"></i><span>COMPNT_NM</span><em>JHB CENTRAL</em></div>
        <div class="r d2"><i class="tri"></i><span>(Derived)</span></div>
        <div class="r alt d2"><i class="tri"></i><span>(Actions)</span></div>
        <div class="r d2"><i class="tri none"></i><span>COMPNT_NM</span><em>JHB CENTRAL</em></div>
        <div class="r alt d2"><i class="tri none"></i><span>CREATE_DT</span><em class="num">20180306</em></div>
        <div class="r d2"><i class="tri none"></i><span>VERSION</span><em>1.2.3</em></div>
      </div>
      <div class="form one"><label>Mode</label><div class="combo mode">Current layer<i class="caret"></i></div><span class="check"></span><label class="auto">Auto open form</label></div>
      <div class="form two"><label class="off">View</label><div class="combo flat">Tree<i class="caret"></i></div><button>Help</button></div>
    </section>
  </div>

  <footer class="status">
    <div class="locator"><svg viewBox="0 0 26 26"><circle cx="10" cy="10" r="8.500" fill="none" stroke="#8e8e8e" stroke-width="2"/><path d="M16 16l8 8" stroke="#8e8e8e" stroke-width="3"/></svg>Type to locate (⌘K)</div>
    <span class="cut c1"><span>d</span></span>
    <div class="coord">28.0328,-26.2280</div>
    <svg class="mouse" viewBox="0 0 34 34"><path d="M9 3Q4 5 4 12L12 26Q16 33 23 30Q29 26 27 19L18 6Q14 1 9 3Z" fill="#fff" stroke="#000" stroke-width="2.400"/><path d="M10 6l4 9M4 14l9 3 6-8" fill="none" stroke="#000" stroke-width="2.600"/><circle cx="20" cy="24" r="2.500" fill="none" stroke="#000" stroke-width="2"/><path d="M21 7h2M26 5h2M29 2h2M0 20h2M3 23h2" stroke="#000" stroke-width="2"/></svg>
    <span class="cut c2"><span>a</span></span>
    <div class="combo scale">1:322655<i class="caret"></i></div>
    <svg class="lock" viewBox="0 0 24 32"><path d="M5 15V9a7 7 0 0 1 14 0v6" fill="none" stroke="#d8d8cc" stroke-width="3"/><rect y="15" width="24" height="16" rx="2" fill="#686868"/></svg>
    <span class="cut c3"><span>r</span></span>
    <div class="combo spin mag">100%<i class="ud"></i></div>
    <span class="cut c4"><span>a</span></span>
    <div class="combo spin rot">0.0 °<i class="ud"></i></div>
    <span class="check on"><svg viewBox="0 0 28 28"><path d="M5 14l6 7L22 6" fill="none" stroke="#333" stroke-width="3"/></svg></span>
    <span class="render">Render</span>
    <svg class="globe" viewBox="0 0 28 28"><circle cx="14" cy="14" r="12.500" fill="#e2e2e2" stroke="#777"/><path d="M2 10H26M1 15H27M4 20H24M6 5H22M14 1V27M14 1Q3 14 14 27M14 1Q25 14 14 27" fill="none" stroke="#6c6c6c" stroke-width="1.500"/></svg>
    <span class="crs">EPSG:4326</span>
    <svg class="bubble" viewBox="0 0 32 32"><path d="M16 1a15 13 0 0 1 9 23q1 4 5 6-7 0-11-3A15 13 0 1 1 16 1Z" fill="#5e5e5e"/><g fill="#fff"><circle cx="8.500" cy="14" r="2.600"/><circle cx="16" cy="14" r="2.600"/><circle cx="23.500" cy="14" r="2.600"/></g></svg>
  </footer>

  <i class="ring"></i>
  <i class="frame"></i>
</main>
</body>
</html>
```
FILE: styles.css
```css
* { box-sizing: border-box; }
html, body { margin: 0; height: 1448px; overflow: hidden; }
body {
  font-family: Inter, "Liberation Sans", sans-serif;
  font-size: 25px;
  color: #111;
  background: linear-gradient(#cdced0, #b4b6b8);
}
i { display: block; font-style: normal; }
svg { display: block; flex: none; }
svg path, svg rect, svg circle, svg ellipse { vector-effect: non-scaling-stroke; }
symbol path, symbol rect, symbol circle, symbol ellipse { vector-effect: non-scaling-stroke; }
.defs { position: absolute; }

.menubar {
  height: 41px;
  background: #555;
  border-bottom: 1px solid #8b8b8b;
  color: #fff;
  font-size: 27px;
  font-weight: 500;
  line-height: 37px;
  display: grid;
  grid-template-columns: 66px 106px 128px 86px 100px 108px 144px 132px 122px 120px 160px 96px 108px 152px 180px 110px;
  padding-left: 36px;
  white-space: nowrap;
}
.menubar .app { font-weight: 700; }
.apple { width: 26px; height: 34px; margin-top: -1px; }

.window {
  position: relative;
  margin-left: 4px;
  width: 1953px;
  height: 1390px;
  border: 1px solid #000;
  border-radius: 12px;
  background: #727272;
  box-shadow: inset 0 0 0 2px #8b8b8b, 0 16px 34px rgba(0, 0, 0, .75);
}
.titlebar {
  height: 46px;
  border-top: 2px solid #8b8b8b;
  border-bottom: 1px solid #757575;
  border-radius: 11px 11px 0 0;
  background: linear-gradient(#585858, #4f4f4f);
  display: flex;
  align-items: center;
  gap: 16px;
  padding: 0 0 2px 15px;
}
.light { width: 24px; height: 24px; border-radius: 50%; }
.red { background: #ff5b51; }
.amber { background: #e6c029; }
.green { background: #53c22b; }
.titlebar h1 { margin: 0 0 0 694px; font-size: 25.9px; font-weight: 400; color: #c6c6c6; white-space: nowrap; }
.tabbar {
  height: 48px;
  background: linear-gradient(#505050, #454545);
  border-bottom: 2px solid #0c0c0c;
  color: #fff;
  font-size: 22.1px;
  font-weight: 500;
  line-height: 49px;
  padding-left: 849px;
}

.toolbar { display: flex; height: 66px; margin-top: 6px; padding-left: 1px; }
.toolbar.second { margin-top: 11px; }
.toolbar > svg, .tool-on svg { width: 68px; height: 66px; overflow: visible; }
.toolbar > .w24, .mini > .w24 { width: 24px; }
.toolbar > .w26 { width: 26px; }
.toolbar > .w64 { width: 64px; }
.toolbar > .w66 { width: 66px; }
.toolbar > .more { width: 12px; height: 16px; margin: 24px 0 0 46px; }
.tool-on { width: 66px; height: 66px; border: 2px solid #f4f4f4; border-radius: 5px; background: #6c6c6c; }
.tool-on svg { width: 66px; margin: -2px; }
.handle { flex: none; display: flex; justify-content: flex-end; align-items: center; }
.handle::after { content: ""; width: 3px; height: 19px; margin-right: -1px; background: #989898; border: 1px solid #858585; border-radius: 2px; }
.w8 { width: 8px; }
.w14 { width: 14px; }
.w16 { width: 16px; }
.w18 { width: 18px; padding-right: 2px; }
.sep { flex: none; width: 8px; display: flex; align-items: center; justify-content: center; padding-left: 2px; }
.sep::after { content: ""; width: 2px; height: 14px; background: #4e4e4e; }
.s10 { width: 10px; padding-left: 4px; }
.lbl { font-family: "Open Sans", sans-serif; font-weight: 600; fill: #2e3436; }
.halo { stroke: #ddd; stroke-width: 8px; paint-order: stroke; }
.dim { fill: #505050; }
.redt { fill: #f01010; }
.qm { font-family: "Liberation Serif", serif; fill: #fff; }

.body { display: grid; grid-template-columns: 492px 758px 701px; height: 1087px; }
.dock-title {
  position: relative;
  height: 47px;
  font-size: 21.5px;
  font-weight: 500;
  line-height: 50px;
  text-align: center;
}
.left .dock-title { padding-right: 58px; }
.right .dock-title { padding-right: 46px; font-size: 22px; }
.x { position: absolute; top: 12px; width: 22px; height: 22px; }
.left .x { right: 12px; }
.right .x { right: 5px; }
.mini { display: flex; height: 52px; padding-left: 3px; }
.mini > svg { width: 52px; height: 52px; }
.mini > .w25 { width: 25px; }
.right .mini { padding-left: 11px; }
.box { background: #b2b2b2; border: 2px solid #383838; border-radius: 5px; }

.browser {
  width: 485px;
  height: 446px;
  margin-top: 6px;
  display: grid;
  grid-template: 424px 16px / 463px 16px;
}
.rows { overflow: hidden; padding-top: 2px; }
.row { display: flex; align-items: center; height: 36px; padding-left: 15px; white-space: nowrap; font-weight: 500; }
.row.l1 { padding-left: 55px; }
.row.path { letter-spacing: -.15px; }
.tri { flex: none; width: 12px; height: 12px; background: #777; clip-path: polygon(10% 5%, 100% 50%, 10% 95%); }
.tri.down { clip-path: polygon(0 5%, 100% 5%, 50% 100%); }
.tri.none { visibility: hidden; }
.fi { width: 28px; height: 28px; margin: 0 14px 0 22px; overflow: visible; }
.fi.f { height: 26px; }
.vbar { margin-top: 2px; background: #363636; padding: 2px 2px 0; }
.vbar i { height: 144px; background: #727272; }
.hbar { margin-left: 1px; background: #363636; padding: 2px 0 2px 2px; }
.hbar i { width: 418px; height: 12px; background: #727272; }
.corner { background: #b2b2b2; border: 1px solid #999; }

.layers-title { height: 52px; line-height: 60px; }
.layers-title .x { top: 17px; }
.layers { width: 485px; height: 423px; margin-top: 6px; padding: 2px 1px; }
.layer { display: flex; align-items: center; height: 44px; background: #efefef; padding: 0 2px 0 46px; }
.check { flex: none; width: 27px; height: 27px; border: 2px solid #444; border-radius: 7px; background: #adadad; }
.check svg { width: 27px; height: 27px; margin: -2px; }
.swatch { width: 32px; height: 32px; margin: 0 12px 0 13px; background: #bddacb; border: 2px solid #9fb5a9; }
.layer b { font-size: 25px; letter-spacing: .43px; text-decoration: underline; text-decoration-thickness: 1px; text-underline-offset: 5px; text-decoration-skip-ink: none; }
.mark { width: 6px; height: 32px; margin-left: auto; background: #8a8a8a; }

.canvas { width: 746px; height: 1076px; margin: 8px 0 0 6px; border: 1px solid #5c5c5c; background: #a9d5bf; }
.canvas svg { width: 744px; height: 1074px; }
.canvas path { fill: none; stroke: #232323; stroke-width: 1.5px; stroke-linejoin: round; }
.canvas .hit { fill: rgba(230, 60, 55, .72); stroke: #f00; stroke-width: 7.5px; }

.results { margin: 7px 0 0 7px; width: 693px; height: 844px; font-weight: 500; padding: 3px 4px 0 2px; }
.head { display: grid; grid-template-columns: 381px 1fr; height: 36px; margin: 0 -1px 2px 1px; background: #727272; border-bottom: 2px solid #383838; font-size: 22px; line-height: 31px; }
.head span { padding-left: 7px; }
.head span + span { padding-left: 6px; border-left: 2px solid #383838; }
.r { position: relative; display: flex; align-items: center; height: 32px; padding-left: 14px; }
.r .tri { margin-right: 20px; transform: scale(.85); }
.r.d1 { padding-left: 54px; }
.r.d2 { padding-left: 94px; }
.r em { position: absolute; left: 388px; font-style: normal; letter-spacing: .1px; }
.r em.num { letter-spacing: .4px; }
.sel { background: #efefef; }
.alt { background: #989898; }

.form { display: flex; align-items: center; font-weight: 500; white-space: nowrap; }
.form.one { height: 48px; margin-top: 11px; padding-left: 17px; }
.form.two { height: 48px; margin-top: 14px; padding-left: 17px; }
.form.one label:first-child { width: 82px; }
.form .off { width: 72px; color: #959595; }
.combo {
  flex: none;
  position: relative;
  height: 48px;
  border: 2px solid #222;
  border-radius: 6px;
  background: linear-gradient(#525252, #393939);
  color: #b4b4b4;
  font-weight: 500;
  line-height: 45px;
  padding-left: 6px;
  white-space: nowrap;
}
.combo.flat { width: 176px; background: none; color: #959595; }
.mode { width: 348px; margin-right: 13px; }
.form .auto { margin-left: 14px; }
.caret { position: absolute; right: 9px; top: 18px; width: 9px; height: 9px; background: #b8b8b8; clip-path: polygon(0 0, 100% 0, 50% 100%); }
button {
  width: 76px;
  height: 42px;
  margin-left: 350px;
  padding: 0;
  border: 2px solid #333;
  border-radius: 6px;
  background: linear-gradient(#9c9c9c, #868686);
  font: 500 21px Inter, sans-serif;
  color: #111;
}

.status { display: flex; align-items: center; height: 57px; padding-left: 7px; font-weight: 500; }
.locator { display: flex; align-items: center; width: 434px; height: 46px; border: 2px solid #333; border-radius: 6px; background: #b2b2b2; color: #666; font-size: 25.3px; padding-left: 16px; }
.locator svg { width: 25px; height: 25px; margin-right: 19px; }
.cut { flex: none; overflow: hidden; font-size: 22px; display: flex; justify-content: flex-end; }
.c1 { width: 9px; margin-left: 60px; }
.c2 { width: 9px; margin-left: 28px; }
.c3 { width: 9px; margin-left: 19px; }
.c4 { width: 9px; margin-left: 17px; }
.coord { flex: none; width: 226px; height: 44px; margin-left: 5px; border: 2px solid #333; border-radius: 6px; background: #b2b2b2; font-size: 22px; line-height: 41px; text-align: center; }
.mouse { width: 34px; height: 34px; margin-left: 7px; }
.status .combo { font-size: 22px; padding-left: 10px; }
.status .scale { width: 205px; margin-left: 4px; }
.lock { width: 24px; height: 32px; margin-left: 25px; }
.status .mag { width: 192px; margin-left: 6px; padding-left: 9px; }
.rot { width: 184px; margin-left: 18px; }
.ud { position: absolute; right: 8px; top: 6px; width: 9px; height: 34px; background: #b8b8b8; clip-path: polygon(50% 0, 100% 26%, 0 26%, 0 74%, 100% 74%, 50% 100%, 0 74%, 0 26%); }
.status .check { margin-left: 14px; }
.render { width: 88px; margin-left: 13px; font-size: 22px; }
.globe { width: 28px; height: 28px; margin-left: 14px; }
.crs { width: 124px; margin-left: 6px; font-size: 22px; }
.bubble { width: 32px; height: 32px; margin-left: 42px; }

.ring { position: absolute; left: 1384px; top: 75px; width: 105px; height: 107px; border: 6px solid #ff2d6f; border-radius: 50%; }
.frame { position: absolute; left: 1366px; top: 509px; width: 483px; height: 120px; border: 6px solid #ff2d6f; border-radius: 3px; }
```
